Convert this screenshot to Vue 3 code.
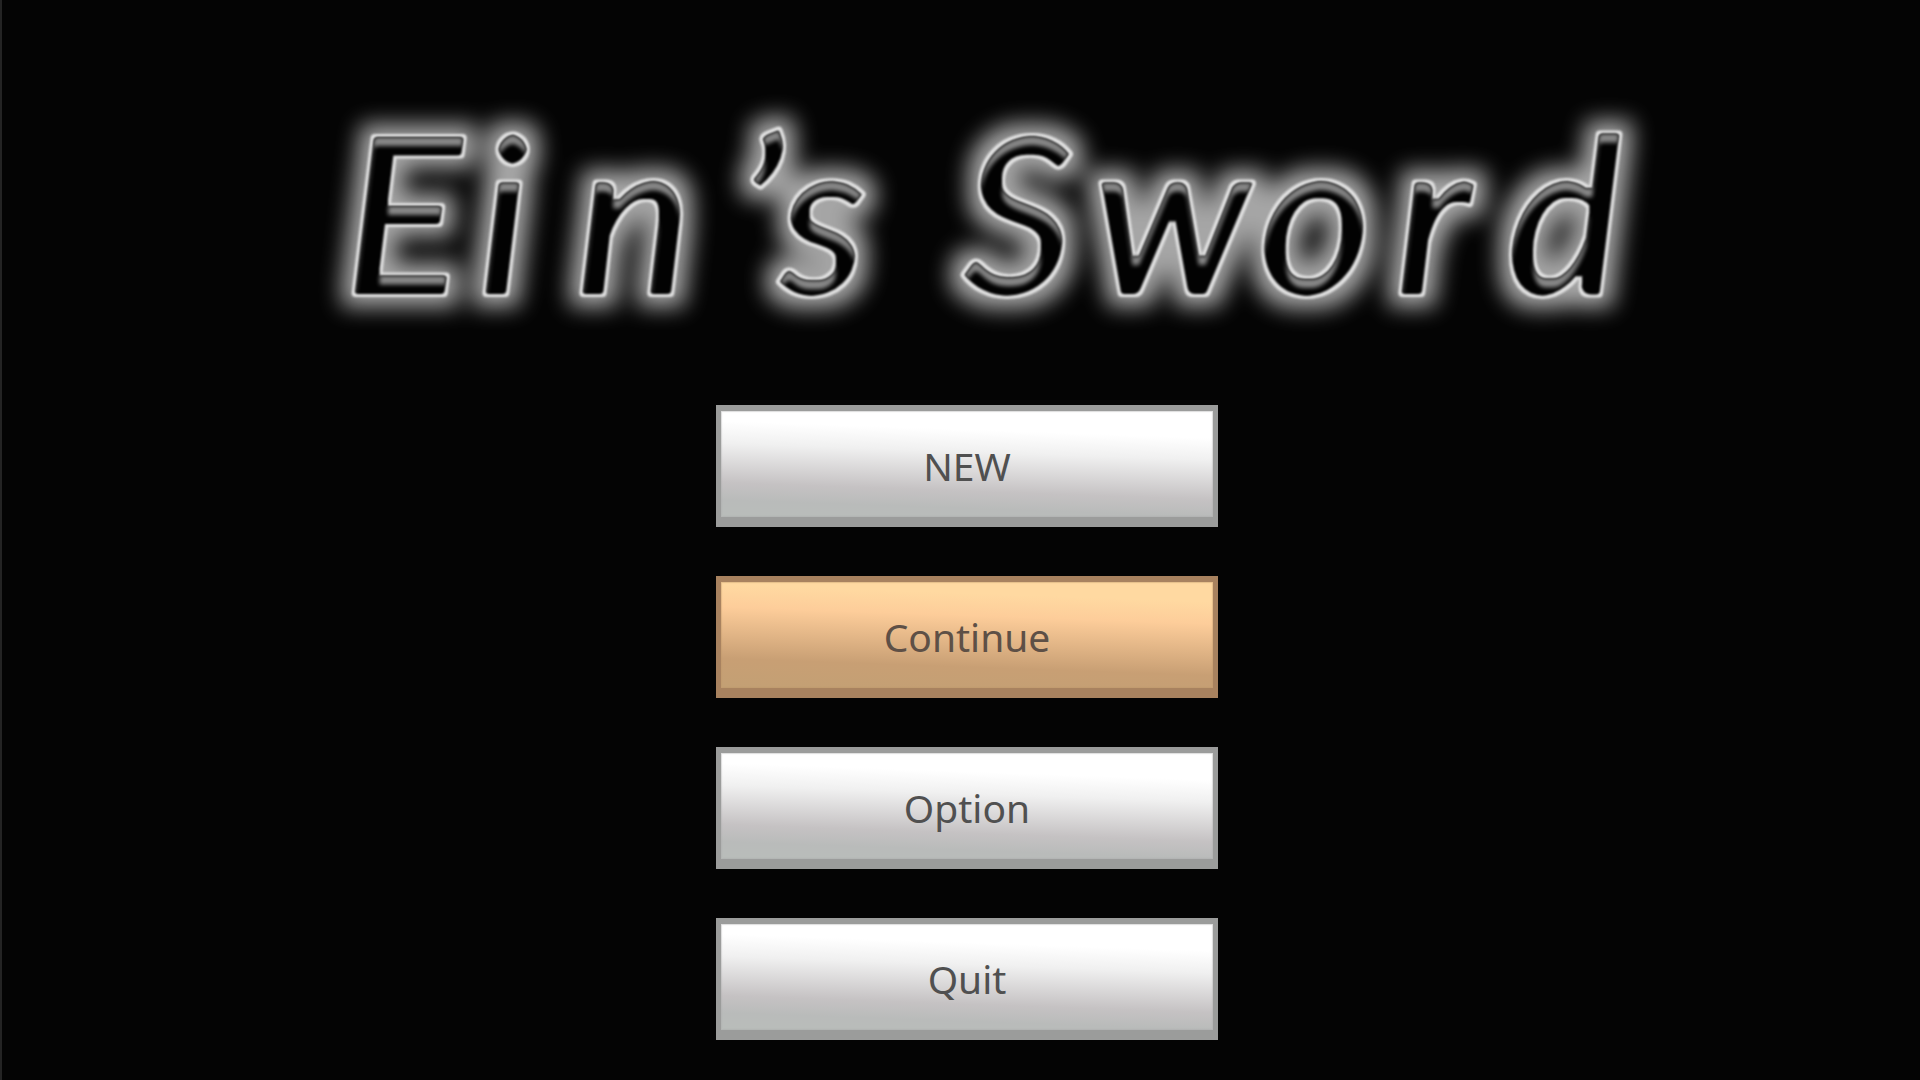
<script setup>
import { ref } from 'vue'

const entries = ['NEW', 'Continue', 'Option', 'Quit']
const selected = ref('Continue')
</script>

<template>
  <main class="title-screen">
    <h1 class="logo">
      <svg viewBox="14 0 1906 405" role="img" aria-label="Ein’s Sword">
        <defs>
          <filter id="glow" filterUnits="userSpaceOnUse" x="280" y="50" width="1420" height="330" color-interpolation-filters="sRGB">
            <feMorphology in="SourceAlpha" operator="dilate" radius="10" result="wide" />
            <feGaussianBlur in="wide" stdDeviation="11" result="haze" />
            <feFlood flood-color="#a6a6a6" />
            <feComposite in2="haze" operator="in" result="halo" />
            <feFlood flood-color="#e2e2e2" />
            <feComposite in2="SourceAlpha" operator="in" result="edge" />
            <feGaussianBlur in="edge" stdDeviation="1" result="rim" />
            <feMorphology in="SourceAlpha" operator="erode" radius="3" result="inner" />
            <feGaussianBlur in="inner" stdDeviation="1" result="core" />
            <feFlood flood-color="#020202" />
            <feComposite in2="core" operator="in" result="body" />
            <feOffset in="inner" dy="9" result="moved" />
            <feComposite in="inner" in2="moved" operator="out" result="top" />
            <feGaussianBlur in="top" stdDeviation="2" result="softTop" />
            <feFlood flood-color="#888888" />
            <feComposite in2="softTop" operator="in" />
            <feComposite in2="core" operator="in" result="bevel" />
            <feMerge>
              <feMergeNode in="halo" />
              <feMergeNode in="rim" />
              <feMergeNode in="body" />
              <feMergeNode in="bevel" />
            </feMerge>
          </filter>
        </defs>
        <text
          class="logo-text"
          filter="url(#glow)"
          x="345 479 577 738 780 900 963 1094 1259 1396 1507"
          y="293"
        >Ein’s Sword</text>
      </svg>
    </h1>
    <nav class="menu" aria-label="Main menu">
      <button
        v-for="entry in entries"
        :key="entry"
        type="button"
        class="entry"
        :class="{ selected: entry === selected }"
        @click="selected = entry"
      >{{ entry }}</button>
    </nav>
  </main>
</template>

<style>
body {
  margin: 0;
  background: #040404;
}
</style>

<style scoped>
.title-screen {
  box-sizing: border-box;
  min-height: 100vh;
  padding: 0 0 40px 12px;
  border-left: 2px solid #242424;
  background: #040404;
}

.logo {
  margin: 0;
}

.logo svg {
  display: block;
  width: 100%;
}

.logo-text {
  font-family: Lato, "Noto Sans", sans-serif;
  font-size: 216px;
  font-style: italic;
  font-weight: 400;
  fill: #000;
  stroke: #000;
  stroke-width: 8px;
  stroke-linejoin: round;
}

.menu {
  display: flex;
  flex-direction: column;
  align-items: center;
  gap: 49px;
}

.entry {
  box-sizing: border-box;
  width: 502px;
  max-width: 90%;
  height: 122px;
  padding: 4px 0 0;
  border: solid #9b9c9b;
  border-width: 6px 5px 10px;
  background: linear-gradient(182deg, #fff 22%, #f0f0f0 40%, #c5c2c3 72%, #b9bbba 86%, #b9bdba) padding-box;
  box-shadow: inset 0 0 1px 1px rgba(170, 170, 170, 0.4);
  color: #505050;
  font-family: "Noto Sans", "Open Sans", sans-serif;
  font-size: 39px;
  line-height: 48px;
  text-align: center;
}

.entry.selected {
  border-color: #a8825f;
  background: linear-gradient(182deg, #ffd9a1 16%, #fdcd9a 34%, #c89f74 76%, #c3a074) padding-box;
  box-shadow: inset 0 0 1px 1px rgba(190, 150, 105, 0.4);
  color: #5e5046;
}
</style>
